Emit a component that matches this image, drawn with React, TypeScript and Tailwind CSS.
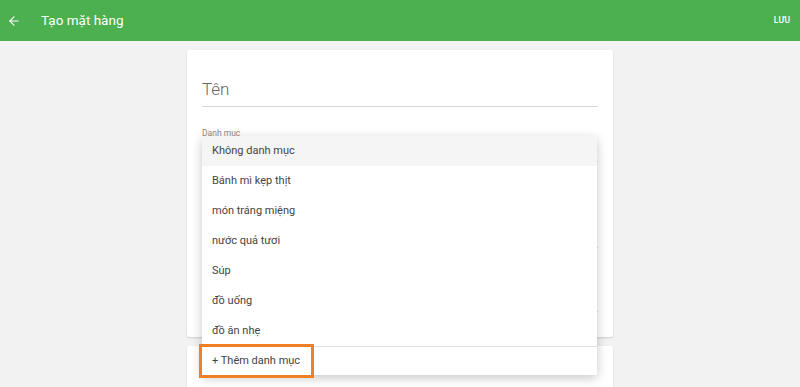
import { ArrowLeft } from 'lucide-react'

const categories = [
  'Không danh mục',
  'Bánh mì kẹp thịt',
  'món tráng miệng',
  'nước quả tươi',
  'Súp',
  'đồ uống',
  'đồ ăn nhẹ',
]

export default function App() {
  return (
    <div className="h-[387px] overflow-hidden bg-[#f2f2f2] font-['Roboto',sans-serif]">
      {/* Header */}
      <div className="flex h-[41px] items-center justify-between bg-[#4caf50] pl-[7px] pr-[10px] text-white">
        <div className="flex items-center">
          <ArrowLeft className="h-[14px] w-[14px]" strokeWidth={2} />
          <span className="ml-[20px] text-[13.5px]">Tạo mặt hàng</span>
        </div>
        <span className="text-[8.5px] font-medium">LƯU</span>
      </div>

      {/* Form card */}
      <div className="mx-auto mt-[9px] w-[426px]">
        <div className="relative h-[287px] rounded-[2px] bg-white px-[15px] shadow-[0_1px_2px_rgba(0,0,0,0.15)]">
          <div className="pt-[27px]">
            <div className="border-b border-[#d6d6d6] pb-[3px] text-[17px] font-light text-[#666]">Tên</div>
          </div>
          <div className="mt-[20px] text-[8.5px] text-[#8a8a8a]">Danh mục</div>
          <div className="mt-[22px] border-b border-[#e0e0e0]" />
          <div className="mt-[85px] border-b border-[#e0e0e0]" />
          <div className="mt-[63px] border-b border-[#e0e0e0]" />

          {/* Dropdown menu */}
          <div className="absolute left-[15px] top-[86px] z-10 w-[395px] bg-white shadow-[0_3px_10px_rgba(0,0,0,0.22)]">
            {categories.map((c, i) => (
              <div
                key={c}
                className={`flex h-[30px] items-center pl-[10px] text-[11px] text-[#444] ${i === 0 ? 'bg-[#f5f5f5]' : ''}`}
              >
                {c}
              </div>
            ))}
            <div className="relative flex h-[29px] items-center border-t border-[#e0e0e0] pl-[10px] text-[11px] text-[#444]">
              + Thêm danh mục
              <div className="absolute -left-[3px] -top-[3px] h-[34px] w-[115px] border-[3px] border-[#f07f25]" />
            </div>
          </div>
        </div>
        <div className="mt-[9px] h-[60px] rounded-[2px] bg-white shadow-[0_1px_2px_rgba(0,0,0,0.15)]" />
      </div>
    </div>
  )
}
